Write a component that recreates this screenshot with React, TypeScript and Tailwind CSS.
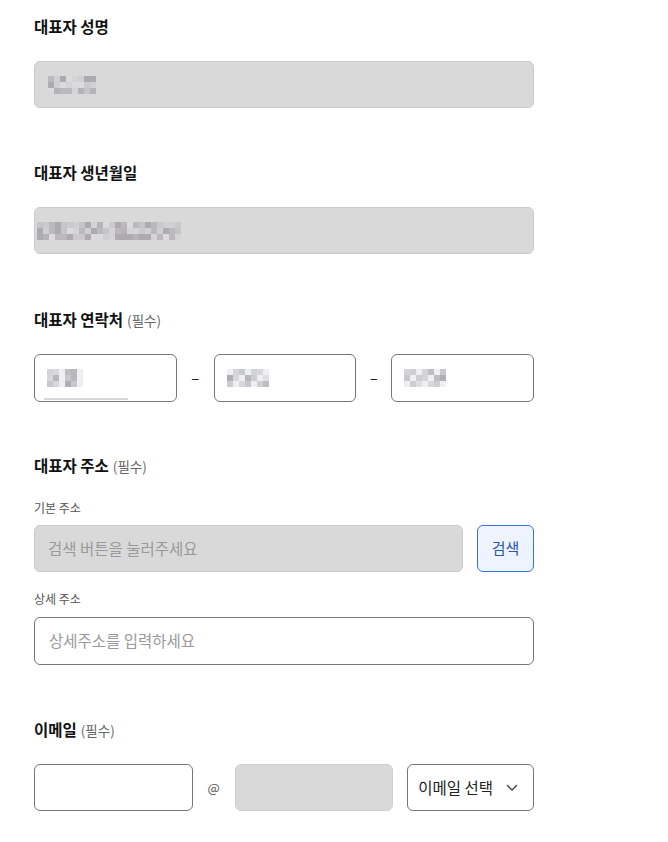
import React from "react";

const shades = ["#c9c9cc", "#b8b6b9", "#d4d4d6", "#a9a7ab", "#c2c3c8", "#dcdcde", "#b1b0b4", "#cfd0d4"];

function Mosaic({ cols, rows = 3, seed = 1, light = false }: { cols: number; rows?: number; seed?: number; light?: boolean }) {
  const cells: string[] = [];
  let s = seed * 9301 + 49297;
  for (let i = 0; i < cols * rows; i++) {
    s = (s * 9301 + 49297) % 233280;
    const idx = Math.floor((s / 233280) * shades.length);
    let c = shades[idx];
    if (light && (s % 3 === 0)) c = "#eceef1";
    cells.push(c);
  }
  return (
    <div className="grid opacity-90" style={{ gridTemplateColumns: `repeat(${cols}, 6px)`, gridAutoRows: "6px" }}>
      {cells.map((c, i) => (
        <div key={i} style={{ background: c }} />
      ))}
    </div>
  );
}

function Label({ text, required = false }: { text: string; required?: boolean }) {
  return (
    <div className="h-5 flex items-center mb-6">
      <span className="text-[15.5px] font-bold text-[#111]">{text}</span>
      {required && <span className="ml-1 text-[13.5px] text-[#666]">(필수)</span>}
    </div>
  );
}

export default function App() {
  return (
    <div
      className="w-[668px] h-[842px] bg-white overflow-hidden"
      style={{ fontFamily: '"Noto Sans CJK KR", "Noto Sans", sans-serif' }}
    >
      <div className="pl-[34px] pt-[17px] w-[534px] flex flex-col">
        {/* 대표자 성명 */}
        <section>
          <Label text="대표자 성명" />
          <div className="h-[47px] w-[500px] rounded-md bg-[#d9d9d9] border border-[#cacaca] flex items-center pl-[13px]">
            <Mosaic cols={8} rows={3} seed={3} />
          </div>
        </section>

        {/* 대표자 생년월일 */}
        <section className="mt-[55px]">
          <Label text="대표자 생년월일" />
          <div className="h-[47px] w-[500px] rounded-md bg-[#d9d9d9] border border-[#cacaca] flex items-center pl-[2px]">
            <Mosaic cols={24} rows={3} seed={7} />
          </div>
        </section>

        {/* 대표자 연락처 */}
        <section className="mt-[56px]">
          <Label text="대표자 연락처" required />
          <div className="flex items-center">
            <div className="relative h-[48px] w-[143px] rounded-md border border-[#777] bg-white flex items-center pl-[12px]">
              <Mosaic cols={6} rows={3} seed={11} light />
              <div className="absolute left-[9px] bottom-[1px] h-[2px] w-[84px] bg-[#d6d6d6]" />
            </div>
            <div className="w-[37px] flex justify-center text-[15px] text-[#222]">–</div>
            <div className="h-[48px] w-[143px] rounded-md border border-[#777] bg-white flex items-center pl-[12px]">
              <Mosaic cols={7} rows={3} seed={13} light />
            </div>
            <div className="w-[35px] flex justify-center text-[15px] text-[#222]">–</div>
            <div className="h-[48px] w-[143px] rounded-md border border-[#777] bg-white flex items-center pl-[12px]">
              <Mosaic cols={7} rows={3} seed={17} light />
            </div>
          </div>
        </section>

        {/* 대표자 주소 */}
        <section className="mt-[54px]">
          <div className="h-5 flex items-center">
            <span className="text-[15.5px] font-bold text-[#111]">대표자 주소</span>
            <span className="ml-1 text-[13.5px] text-[#666]">(필수)</span>
          </div>
          <div className="mt-[24px] h-4 flex items-center text-[12px] text-[#555]">기본 주소</div>
          <div className="mt-[9px] flex gap-[14px]">
            <div className="h-[47px] w-[430px] rounded-md bg-[#d9d9d9] border border-[#cacaca] flex items-center pl-[13px] text-[15.5px] text-[#999]">
              검색 버튼을 눌러주세요
            </div>
            <button className="h-[47px] w-[57px] rounded-md bg-[#eef4ff] border border-[#3a6fd8] text-[15px] text-[#2d54b0] flex items-center justify-center">
              검색
            </button>
          </div>
          <div className="mt-[19px] h-4 flex items-center text-[12px] text-[#555]">상세 주소</div>
          <div className="mt-[10px] h-[48px] w-[500px] rounded-md border border-[#777] bg-white flex items-center pl-[14px] text-[15.5px] text-[#999]">
            상세주소를 입력하세요
          </div>
        </section>

        {/* 이메일 */}
        <section className="mt-[55px]">
          <Label text="이메일" required />
          <div className="flex items-center">
            <div className="h-[47px] w-[159px] rounded-md border border-[#777] bg-white" />
            <div className="w-[42px] flex justify-center text-[13px] text-[#555]">@</div>
            <div className="h-[47px] w-[159px] rounded-md bg-[#d9d9d9] border border-[#d0d0d0]" />
            <div className="ml-[14px] h-[47px] w-[127px] rounded-md border border-[#777] bg-white flex items-center justify-between pl-[10px] pr-[15px]">
              <span className="text-[15.5px] text-[#222]">이메일 선택</span>
              <svg width="12" height="8" viewBox="0 0 12 8" fill="none">
                <path d="M1.5 1.5L6 6L10.5 1.5" stroke="#444" strokeWidth="1.4" strokeLinecap="round" strokeLinejoin="round" />
              </svg>
            </div>
          </div>
        </section>
      </div>
    </div>
  );
}
